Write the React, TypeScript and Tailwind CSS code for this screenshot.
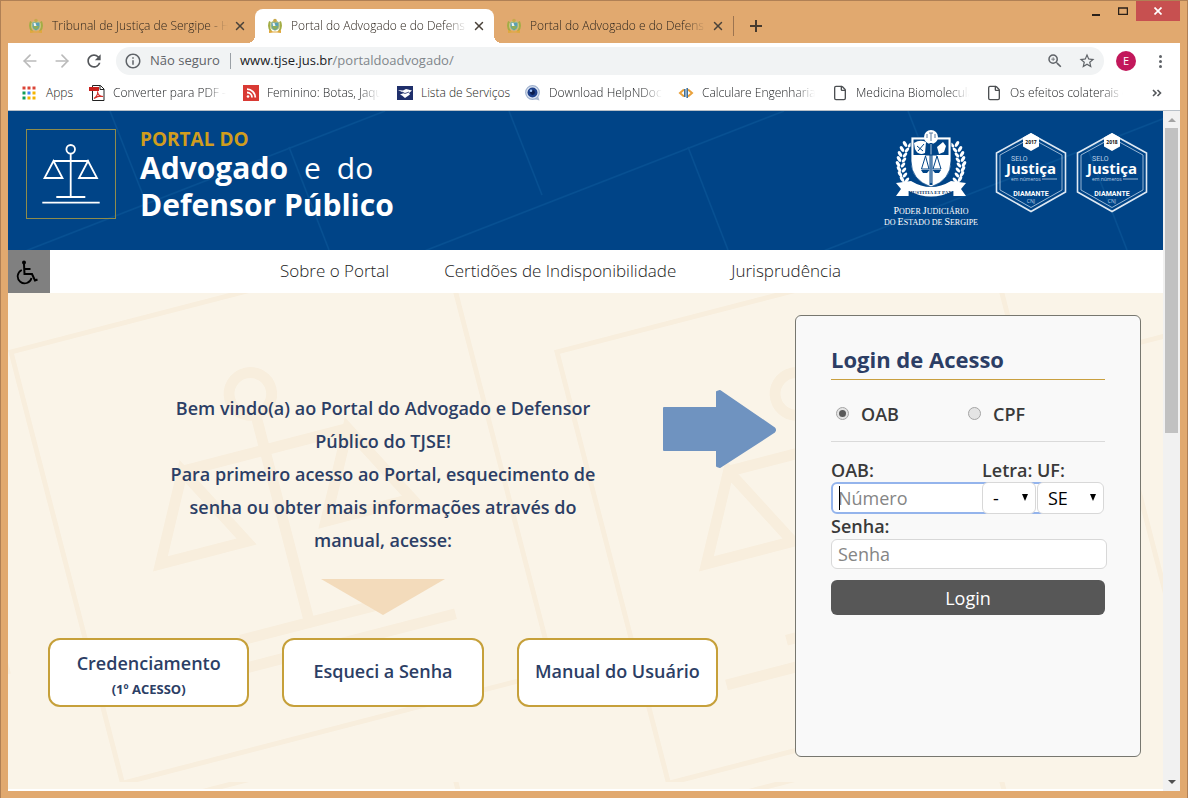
import { ArrowLeft, ArrowRight, File, X } from "lucide-react";
import { MdInfoOutline, MdRefresh, MdStarBorder, MdZoomIn } from "react-icons/md";
import type { ReactNode } from "react";

const tabs = [
  { title: "Tribunal de Justiça de Sergipe - H", active: false },
  { title: "Portal do Advogado e do Defens", active: true },
  { title: "Portal do Advogado e do Defens", active: false },
];

const navLinks = ["Sobre o Portal", "Certidões de Indisponibilidade", "Jurisprudência"];

function CrestFavicon() {
  return (
    <svg viewBox="0 0 16 16" className="size-4 shrink-0">
      <path d="M3 3.500 Q.5 9 4.500 14 M13 3.500 Q15.500 9 11.500 14" fill="none" stroke="#a3ad45" strokeWidth="2" />
      <circle cx="8" cy="7.500" r="5" fill="#c5c77f" />
      <path d="M4.500 4.500 h7 v4.500 q-1 3 -3.500 3.500 q-2.500 -.5 -3.500 -3.500 z" fill="#5aa0b4" />
      <path d="M5 8 h6 q-.5 3 -3 3.800 q-2.500 -.8 -3 -3.800 z" fill="#8fae5a" />
      <circle cx="8" cy="2.600" r="1.800" fill="#c8a94e" />
      <path d="M5.500 5 h2 l1 3 h-2.500 z" fill="#eef5f0" />
      <path d="M2 12 L6 13.500 H10 L14 12 V15 L10 14.500 H6 L2 15 Z" fill="#e0a83c" />
    </svg>
  );
}

function AppsIcon() {
  const colors = ["#db4437", "#db4437", "#db4437", "#0f9d58", "#4285f4", "#f4b400", "#0f9d58", "#f4b400", "#f4b400"];
  return (
    <svg viewBox="0 0 14 14" className="size-3.5 shrink-0">
      {colors.map((c, i) => (
        <rect key={i} x={(i % 3) * 5 + 0.5} y={Math.floor(i / 3) * 5 + 0.5} width="3" height="3" fill={c} />
      ))}
    </svg>
  );
}

function PdfIcon() {
  return (
    <svg viewBox="0 0 16 16" className="size-4 shrink-0">
      <path d="M3.500 .5 H11.500 L15 4 V15.500 H3.500 Z" fill="#fff" stroke="#222" />
      <path d="M11 .5 V4.500 H15" fill="none" stroke="#222" />
      <path d="M0 2 H10 V6 H0 Z" fill="#c8201c" />
      <path
        d="M5 13.500 C8 11 9 8 8.500 6.500 C8.500 9 11 12 14 11.500 C11 10.500 8 11.500 5 13.500 Z"
        fill="none"
        stroke="#d3302b"
        strokeWidth="1.100"
      />
    </svg>
  );
}

function FeedIcon() {
  return (
    <svg viewBox="0 0 16 16" className="size-4 shrink-0">
      <rect width="16" height="16" fill="#d93a34" />
      <circle cx="5" cy="11.500" r="1.300" fill="#fff" />
      <path d="M4 7.500 a5 5 0 0 1 5 5 M4 4.200 a8.300 8.300 0 0 1 8.300 8.300" fill="none" stroke="#fff" strokeWidth="1.800" />
    </svg>
  );
}

function ReceitaIcon() {
  return (
    <svg viewBox="0 0 16 16" className="size-4 shrink-0">
      <rect y="1" width="16" height="14" fill="#1f2f6b" />
      <path d="M1 5 L6 5.500 L9 4 L15 5.500 L12 8 L13 9.500 L8 13 L5 10.500 L3 9.500 L7 8 Z" fill="#fff" />
      <path d="M5 7 L8 8.500 L12 7" fill="none" stroke="#1f2f6b" strokeWidth=".8" />
    </svg>
  );
}

function HelpNDocIcon() {
  return (
    <svg viewBox="0 0 16 16" className="size-4 shrink-0">
      <path d="M9 14 L14.500 15.500 L13 11 Z" fill="#aab8cf" />
      <circle cx="7.500" cy="7.500" r="6.800" fill="#dfe7f3" stroke="#9fb1cf" strokeWidth="1.200" />
      <circle cx="7.500" cy="7.500" r="5" fill="#1d3f8a" />
      <circle cx="7.500" cy="7.500" r="2.400" fill="#0b1c4c" />
      <circle cx="6" cy="5.800" r="1.300" fill="#9cc0f5" />
    </svg>
  );
}

function CalculareIcon() {
  return (
    <svg viewBox="0 0 16 16" className="size-4 shrink-0">
      <path d="M6 4.500 L2 8 L6 11.500 M10 4.500 L14 8 L10 11.500" fill="none" stroke="#e9a13b" strokeWidth="2" />
      <path d="M6.800 4 V12 M9.200 3 V13" stroke="#41719c" strokeWidth="1.600" />
    </svg>
  );
}

const pageIcon = <File className="size-4 shrink-0 text-[#4c4f52]" strokeWidth={2} />;

const bookmarks: { label: string; icon: ReactNode; width: string; faded?: boolean }[] = [
  { label: "Apps", icon: <AppsIcon />, width: "w-[50px] gap-2.5" },
  { label: "Converter para PDF –", icon: <PdfIcon />, width: "w-[137px] gap-2", faded: true },
  { label: "Feminino: Botas, Jaqu", icon: <FeedIcon />, width: "w-[137px] gap-2", faded: true },
  { label: "Lista de Serviços", icon: <ReceitaIcon />, width: "w-[111px] gap-2" },
  { label: "Download HelpNDoc", icon: <HelpNDocIcon />, width: "w-[136px] gap-2", faded: true },
  { label: "Calculare Engenharia", icon: <CalculareIcon />, width: "w-[137px] gap-2", faded: true },
  { label: "Medicina Biomolecula", icon: pageIcon, width: "w-[137px] gap-2", faded: true },
  { label: "Os efeitos colaterais c", icon: pageIcon, width: "w-[137px] gap-2", faded: true },
];

function TitleBar() {
  return (
    <div className="flex h-[42px] items-end pl-2">
      {tabs.map((tab, i) => (
        <div
          key={i}
          className={
            tab.active
              ? "relative flex h-[34px] w-[239px] items-center rounded-t-lg bg-white pl-3 before:absolute before:bottom-0 before:-left-2 before:size-2 before:bg-[radial-gradient(circle_at_0_0,transparent_8px,white_8px)] after:absolute after:-right-2 after:bottom-0 after:size-2 after:bg-[radial-gradient(circle_at_100%_0,transparent_8px,white_8px)]"
              : "relative flex h-[34px] w-[239px] items-center pl-3"
          }
        >
          <CrestFavicon />
          <span className="ml-2 w-44 overflow-hidden whitespace-nowrap text-xs font-light text-[#2e261e] [mask-image:linear-gradient(to_right,black_88%,transparent)]">
            {tab.title}
          </span>
          <button aria-label="Fechar guia" className="ml-[5px] text-[#4a423a]">
            <X className="size-3.5" strokeWidth={2.5} />
          </button>
        </div>
      ))}
      <div className="flex h-[34px] items-center">
        <span className="h-5 w-px bg-[#9c7450]" />
        <button aria-label="Nova guia" className="ml-4 text-[#463a2e]">
          <svg viewBox="0 0 12 12" className="size-3">
            <path d="M6 0 V12 M0 6 H12" stroke="currentColor" strokeWidth="2" />
          </svg>
        </button>
      </div>
      <div className="ml-auto flex h-5 items-start self-start">
        <button aria-label="Minimizar" className="flex h-6 w-7 items-center justify-center">
          <svg viewBox="0 0 10 10" className="size-2.5">
            <path d="M1 7 H9" stroke="#2a211a" strokeWidth="2" />
          </svg>
        </button>
        <button aria-label="Maximizar" className="flex h-5 w-[26px] items-center justify-center">
          <svg viewBox="0 0 10 8" className="h-2 w-2.5">
            <path d="M.5 1 H9.500 V7.500 H.5 Z" fill="none" stroke="#2a211a" strokeWidth="1.500" />
          </svg>
        </button>
        <button aria-label="Fechar" className="flex h-5 w-11 items-center justify-center bg-[#c75050] text-white">
          <svg viewBox="0 0 8 8" className="size-2">
            <path d="M.5 .5 L7.500 7.500 M7.500 .5 L.5 7.500" stroke="currentColor" strokeWidth="1.700" />
          </svg>
        </button>
      </div>
    </div>
  );
}

function Toolbar() {
  return (
    <div className="flex h-9 items-center bg-white pr-4 pl-3">
      <button aria-label="Voltar" className="w-8 text-[#bababa]">
        <ArrowLeft className="size-5" strokeWidth={2} />
      </button>
      <button aria-label="Avançar" className="w-8 text-[#bababa]">
        <ArrowRight className="size-5" strokeWidth={2} />
      </button>
      <button aria-label="Recarregar" className="w-8 text-[#54575b]">
        <MdRefresh className="size-5" />
      </button>
      <div className="flex h-7 flex-1 items-center rounded-full bg-[#f1f3f4] px-2 text-[13px] text-[#5f6368]">
        <MdInfoOutline className="size-[18px] shrink-0" />
        <span className="ml-2 w-20 whitespace-nowrap">Não seguro</span>
        <span className="h-4 w-px bg-[#9aa0a6]" />
        <span className="ml-[9px] flex-1 whitespace-nowrap text-[#80868b]">
          <span className="text-[#202124]">www.tjse.jus.br</span>/portaldoadvogado/
        </span>
        <button aria-label="Zoom" className="mr-3.5">
          <MdZoomIn className="size-[18px]" />
        </button>
        <button aria-label="Adicionar aos favoritos">
          <MdStarBorder className="size-[18px]" />
        </button>
      </div>
      <span className="ml-3 flex size-5 items-center justify-center rounded-full bg-[#c2185b] text-[11px] text-white">E</span>
      <button aria-label="Menu" className="ml-4 flex w-3 flex-col items-center gap-0.5 pl-1">
        <span className="size-[3px] rounded-full bg-[#5f6368]" />
        <span className="size-[3px] rounded-full bg-[#5f6368]" />
        <span className="size-[3px] rounded-full bg-[#5f6368]" />
      </button>
    </div>
  );
}

function BookmarksBar() {
  return (
    <div className="flex h-8 items-center gap-[17px] overflow-hidden border-b border-[#b8c0c8] bg-white pr-[18px] pb-1 pl-3.5 text-xs font-light text-[#1c1e20]">
      {bookmarks.map((b) => (
        <a key={b.label} href="#" className={`flex shrink-0 items-center ${b.width}`}>
          {b.icon}
          <span
            className={
              b.faded
                ? "w-[113px] whitespace-nowrap [mask-image:linear-gradient(to_right,black_82%,transparent)]"
                : "whitespace-nowrap"
            }
          >
            {b.label}
          </span>
        </a>
      ))}
      <button aria-label="Mais favoritos" className="ml-auto">
        <svg viewBox="0 0 10 8" className="h-2 w-2.5">
          <path d="M1 1 L4 4 L1 7 M5.500 1 L8.500 4 L5.500 7" fill="none" stroke="#54575b" strokeWidth="1.600" />
        </svg>
      </button>
    </div>
  );
}

/* Scales drawing on a 90x90 grid, shared by the logo and the watermark */
function Scales({ strokeWidth }: { strokeWidth: number }) {
  return (
    <g fill="none" stroke="currentColor" strokeWidth={strokeWidth}>
      <circle cx="44.700" cy="20.300" r="4.300" />
      <path d="M44.700 24.600 V68 M27 32 H62.500" />
      <path d="M27.500 32 L18.500 49 H36.500 Z" />
      <path d="M62 32 L53 49 H71 Z" />
      <path d="M30.300 68 H59.300 M16.300 73.700 H73.700" />
    </g>
  );
}

function Crest() {
  return (
    <svg viewBox="0 0 96 100" className="h-[100px] w-24 shrink-0">
      {/* laurel branches */}
      <g fill="#fff">
        {[0, 1, 2, 3, 4, 5, 6, 7, 8].map((i) => {
          const y = 15 + i * 5;
          const x = [24, 21, 19, 18, 17, 18, 19, 21, 24][i];
          return (
            <g key={i}>
              <ellipse cx={x - 2} cy={y} rx="1.700" ry="3.200" transform={`rotate(-30 ${x - 2} ${y})`} />
              <ellipse cx={x + 3} cy={y + 1} rx="1.500" ry="3" transform={`rotate(40 ${x + 3} ${y + 1})`} />
              <ellipse cx={98 - x} cy={y} rx="1.700" ry="3.200" transform={`rotate(30 ${98 - x} ${y})`} />
              <ellipse cx={93 - x} cy={y + 1} rx="1.500" ry="3" transform={`rotate(-40 ${93 - x} ${y + 1})`} />
            </g>
          );
        })}
      </g>
      <path d="M28 8 H68 V32 Q68 51 48 58 Q28 51 28 32 Z" fill="#fff" stroke="#004487" strokeWidth=".8" />
      <path d="M30.500 10.500 H65.500 V26 H30.500 Z" fill="#004487" />
      <path d="M31 14 Q37 10 43 13 L42 24 Q35 27 32 20 Z M54 18 L60 13 L63 17 L61 23 L56 25 Z" fill="#fff" />
      <path d="M34 17 L40 22 M35 22 L41 15" stroke="#004487" />
      <circle cx="48" cy="8" r="7" fill="#fff" />
      <path d="M46 4 H50 M48 4 V12 M44 5 V9 M52 5 V9" stroke="#56799f" />
      <path d="M48 14 V56" stroke="#004487" strokeWidth="3" />
      <path d="M48 15 V54" stroke="#d7e2ee" strokeWidth=".8" />
      <path d="M42 26 H54 M42.500 27 L38.500 40 H46 Z M54 27 L50 40 H58 Z" fill="none" stroke="#004487" />
      <path d="M38 41 H46.500 L44 44 H40 Z M49.500 41 H58 L56 44 H52 Z" fill="#004487" />
      <path d="M13 54 L28 52 Q48 64 68 52 L83 54 L78 60 L83 67 L70 67 V62 Q48 73 26 62 V67 L13 67 L18 60 Z" fill="#fff" />
      <path d="M26 62 V67 M70 62 V67" stroke="#004487" strokeWidth=".8" />
      <text x="48" y="64.500" textAnchor="middle" fontSize="5" fontWeight="700" fill="#143a66" fontFamily="Liberation Serif, serif">
        JUSTITIA ET PAX
      </text>
      <text x="48" y="85" textAnchor="middle" fill="#fff" fontFamily="Liberation Serif, serif">
        <tspan fontSize="10">P</tspan>
        <tspan fontSize="8">ODER </tspan>
        <tspan fontSize="10">J</tspan>
        <tspan fontSize="8">UDICIÁRIO</tspan>
      </text>
      <text x="48" y="96" textAnchor="middle" fill="#fff" fontFamily="Liberation Serif, serif">
        <tspan fontSize="8">DO </tspan>
        <tspan fontSize="10">E</tspan>
        <tspan fontSize="8">STADO DE </tspan>
        <tspan fontSize="10">S</tspan>
        <tspan fontSize="8">ERGIPE</tspan>
      </text>
    </svg>
  );
}

function Seal({ year }: { year: string }) {
  return (
    <svg viewBox="0 0 72 82" className="h-[82px] w-[72px] shrink-0" fontFamily="Open Sans, sans-serif" fill="#fff">
      <path d="M36 2 L70.500 21 V60 L36 79.500 L1.500 60 V21 Z" fill="none" stroke="#dfe9f3" strokeWidth="1.600" />
      <path d="M36 6 L67 23 V58 L36 75.500 L5 58 V23 Z" fill="none" stroke="#a9c3dc" strokeWidth=".9" />
      <path d="M36 1 L44 5.500 V14.500 L36 19 L28 14.500 V5.500 Z" />
      <text x="36" y="12" textAnchor="middle" fontSize="5" fontWeight="700" fill="#111">
        {year}
      </text>
      <text x="16" y="29" fontSize="7" fill="#bcd0e4" fontFamily="Roboto, sans-serif">
        SELO
      </text>
      <text x="36" y="42" textAnchor="middle" fontSize="15" fontWeight="700">
        Justiça
      </text>
      <text x="16" y="49" fontSize="5" fill="#bcd0e4">
        em números
      </text>
      <path d="M47 47 H62" stroke="#bcd0e4" strokeWidth=".8" />
      <text x="36" y="64" textAnchor="middle" fontSize="7" fontWeight="700" fontFamily="Roboto, sans-serif">
        DIAMANTE
      </text>
      <text x="36" y="71" textAnchor="middle" fontSize="5" fill="#bcd0e4">
        CNJ
      </text>
    </svg>
  );
}

function SiteHeader() {
  return (
    <header className="relative flex h-[139px] items-start bg-[#004487]">
      <svg className="absolute inset-0 size-full text-[#075092]" aria-hidden="true">
        <defs>
          <pattern id="header-lines" width="399" height="139" patternUnits="userSpaceOnUse">
            <path
              d="M25 137 L377 0 M102 0 L135 84 M281 36 L321 139 M424 137 L377 156 M-22 156 L25 137"
              stroke="currentColor"
              strokeWidth="1.500"
            />
          </pattern>
        </defs>
        <rect width="100%" height="100%" fill="url(#header-lines)" />
      </svg>
      <div className="relative flex w-full items-start justify-between pt-[18px] pr-[15px] pl-[18px]">
        <div className="flex items-start gap-6 text-white">
          <svg viewBox="0 0 90 90" className="size-[90px]">
            <rect x=".5" y=".5" width="89" height="89" fill="none" stroke="#8f8c4b" />
            <Scales strokeWidth={1.8} />
          </svg>
          <h1 className="text-3xl leading-[37px] font-bold whitespace-nowrap">
            <span className="block text-[19px] leading-5 text-[#d09d1e]">PORTAL DO</span>
            <span className="flex gap-4">
              Advogado <span className="font-normal">e</span> <span className="font-normal">do</span>
            </span>
            Defensor Público
          </h1>
        </div>
        <div className="flex items-start">
          <Crest />
          <div className="mt-[3px] ml-4 flex gap-[9px]">
            <Seal year="2017" />
            <Seal year="2018" />
          </div>
        </div>
      </div>
    </header>
  );
}

function SiteNav() {
  return (
    <nav className="flex h-[43px] items-center bg-white">
      <button aria-label="Acessibilidade" className="flex h-full w-[42px] items-center justify-center bg-[#808080] pr-1">
        <svg viewBox="0 0 24 26" className="h-[26px] w-6" fill="none" stroke="#000" strokeWidth="1.800">
          <circle cx="9" cy="3.500" r="2" fill="#000" stroke="none" />
          <path d="M9 5 L9.500 15 H17 L20 21.500 L22.500 20.500 M9.300 10 H15.500" strokeWidth="2" />
          <path d="M6.800 11 A7 7 0 1 0 16.500 19" />
        </svg>
      </button>
      <div className="flex flex-1 justify-center gap-[55px] pr-[92px] pb-0.5 text-[17px] font-light text-[#222]">
        {navLinks.map((link) => (
          <a key={link} href="#" className="whitespace-nowrap">
            {link}
          </a>
        ))}
      </div>
    </nav>
  );
}

function Watermark() {
  return (
    <svg className="absolute inset-0 size-full text-[#f8eedd]" aria-hidden="true">
      <defs>
        <pattern id="scales-tile" width="546" height="489" patternUnits="userSpaceOnUse">
          {[-546, 0].map((x) => (
            <g key={x} transform={`translate(${x + 3} 59) rotate(-14.500) scale(4.950)`}>
              <rect width="90" height="90" fill="none" stroke="currentColor" strokeWidth="1" />
              <Scales strokeWidth={2.2} />
            </g>
          ))}
        </pattern>
      </defs>
      <rect width="100%" height="100%" fill="url(#scales-tile)" />
    </svg>
  );
}

function Welcome() {
  const action =
    "flex h-[69px] flex-col items-center justify-center rounded-xl border-2 border-[#c6a03a] bg-white text-lg leading-6 font-semibold";
  return (
    <div className="flex flex-1 flex-col items-center pt-[77px] text-[#2c3e65]">
      <p className="max-w-[450px] text-center text-lg leading-[33px] font-semibold">
        Bem vindo(a) ao Portal do Advogado e Defensor Público do TJSE!
        <br />
        Para primeiro acesso ao Portal, esquecimento de senha ou obter mais informações através do manual, acesse:
      </p>
      <svg viewBox="0 0 124 36" className="mt-[22px] h-9 w-[124px]">
        <path d="M0 0 H124 L62 36 Z" fill="#f3dbbb" />
      </svg>
      <div className="mt-[23px] grid w-full grid-cols-3 gap-[33px]">
        <button className={`${action} pt-1.5`}>
          Credenciamento
          <span className="mt-0.5 text-[13px] font-bold">(1º ACESSO)</span>
        </button>
        <button className={`${action} pb-1`}>Esqueci a Senha</button>
        <button className={`${action} pb-1`}>Manual do Usuário</button>
      </div>
    </div>
  );
}

function SelectBox({ id, value, className }: { id: string; value: string; className: string }) {
  return (
    <div className={`relative ${className}`}>
      <select
        id={id}
        defaultValue={value}
        className="block h-8 w-full appearance-none rounded-md border border-[#d8d8d8] bg-white pl-2.5 text-lg leading-7 text-black"
      >
        <option>{value}</option>
      </select>
      <svg viewBox="0 0 6 7" className="pointer-events-none absolute top-3 right-2 h-[7px] w-1.5">
        <path d="M0 0 H6 L3 7 Z" fill="#000" />
      </svg>
    </div>
  );
}

function LoginCard() {
  const radio =
    "flex size-[13px] appearance-none items-center justify-center rounded-full border border-[#a5a5a5] bg-[#e4e4e4] checked:before:size-[7px] checked:before:rounded-full checked:before:bg-[#5a5a5a]";
  return (
    <form
      onSubmit={(e) => e.preventDefault()}
      className="h-[442px] w-[346px] shrink-0 rounded-md border border-[#77776f] bg-[#f9f9f9] px-[35px] pt-7 text-lg font-semibold text-[#3a3a3a]"
    >
      <h2 className="pb-1 text-[22px] leading-[31px] font-bold text-[#2c3e65]">Login de Acesso</h2>
      <hr className="border-[#c9a040]" />
      <div className="flex h-[62px] items-center border-b border-[#dadada] pt-1.5">
        <label className="flex w-[132px] items-center gap-3 pl-[5px]">
          <input type="radio" name="tipo" defaultChecked className={radio} />
          OAB
        </label>
        <label className="flex items-center gap-3 pl-[5px]">
          <input type="radio" name="tipo" className={radio} />
          CPF
        </label>
      </div>
      <div className="mt-4 flex">
        <div className="relative w-[151px] shrink-0">
          <label htmlFor="numero" className="block leading-6">
            OAB:
          </label>
          <input
            id="numero"
            type="text"
            placeholder="Número"
            className="block h-8 w-[217px] rounded-md border-2 border-[#94b4ec] bg-white px-[5px] font-normal placeholder:text-[#858585]"
          />
          <span className="absolute top-[28px] left-2 h-6 w-px bg-black" />
        </div>
        <div className="relative w-[55px] shrink-0">
          <label htmlFor="letra" className="block leading-6 whitespace-nowrap">
            Letra:
          </label>
          <SelectBox id="letra" value="-" className="w-[54px] font-normal" />
        </div>
        <div className="relative w-[67px]">
          <label htmlFor="uf" className="block leading-6">
            UF:
          </label>
          <SelectBox id="uf" value="SE" className="w-full font-normal" />
        </div>
      </div>
      <label htmlFor="senha" className="block leading-[25px]">
        Senha:
      </label>
      <input
        id="senha"
        type="password"
        placeholder="Senha"
        className="block h-[30px] w-[276px] rounded-md border border-[#d8d8d8] bg-white px-1.5 font-normal placeholder:text-[#858585]"
      />
      <button type="submit" className="mt-[11px] h-[35px] w-full rounded-md bg-[#575757] font-normal text-white">
        Login
      </button>
    </form>
  );
}

function Scrollbar() {
  return (
    <div className="flex w-[17px] shrink-0 flex-col items-center bg-[#f1f1f1] py-[7px]">
      <svg viewBox="0 0 8 4" className="h-1 w-2">
        <path d="M4 0 L8 4 H0 Z" fill="#a3a3a3" />
      </svg>
      <div className="mt-1.5 h-[305px] w-[13px] bg-[#c1c1c1]" />
      <svg viewBox="0 0 8 4" className="mt-auto h-1 w-2">
        <path d="M0 0 H8 L4 4 Z" fill="#505050" />
      </svg>
    </div>
  );
}

export default function App() {
  return (
    <div className="flex min-h-screen flex-col border border-[#b08055] bg-[#e1a96f] px-[7px] pb-[7px] font-['Open_Sans',sans-serif]">
      <TitleBar />
      <Toolbar />
      <BookmarksBar />
      <div className="flex flex-1 bg-white">
        <div className="flex flex-1 flex-col">
          <SiteHeader />
          <SiteNav />
          <main className="relative mb-0.5 flex-1 bg-[#faf4e8]">
            <Watermark />
            <div className="relative flex gap-[77px] pt-[22px] pr-[22px] pb-8 pl-10">
              <Welcome />
              <LoginCard />
              {/* arrow pointing at the login card */}
              <svg viewBox="0 0 114 80" className="absolute top-24 right-[387px] h-20 w-[114px]">
                <path
                  d="M2 19 H55 V3 L58 2 L112 39 Q114 41 112 43 L58 78 L55 77 V61 H2 Z"
                  fill="#6f93c0"
                  stroke="#6f93c0"
                  strokeWidth="2"
                  strokeLinejoin="round"
                />
              </svg>
            </div>
          </main>
        </div>
        <Scrollbar />
      </div>
    </div>
  );
}
